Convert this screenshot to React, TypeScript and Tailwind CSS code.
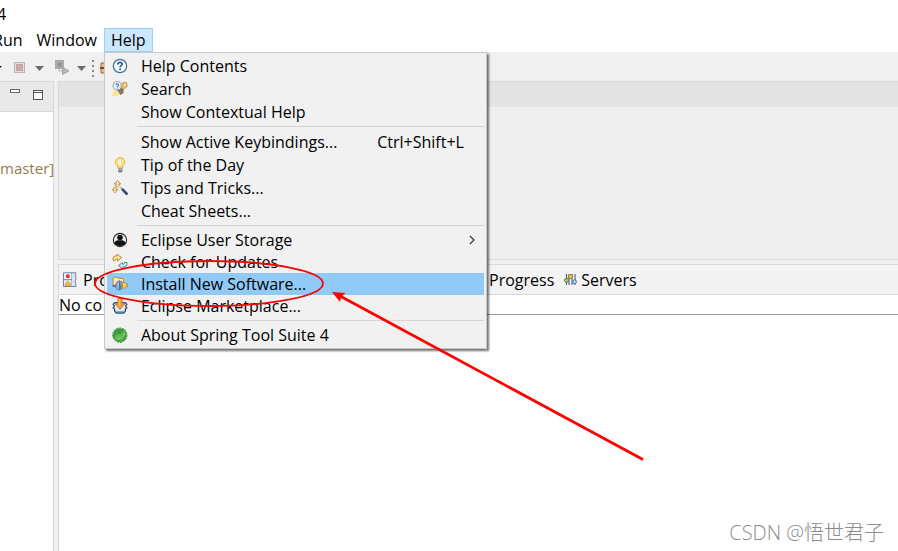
import type {ReactNode} from "react";

interface MenuEntry {
  label: string;
  icon?: ReactNode;
  shortcut?: string;
  submenu?: boolean;
  active?: boolean;
}

const HelpIcon = () => (
  <svg width="16" height="16" viewBox="0 0 16 16" fill="none">
    <circle cx="8" cy="8" r="6.7" fill="#f6fafd" stroke="#3f6fa0" strokeWidth="1.2" />
    <path d="M5.9 6.4C5.9 3.6 10.2 3.7 10.1 6.2C10.1 7.7 8.1 7.6 8.1 9.3" stroke="#2b5f95" strokeWidth="1.7" />
    <rect x="7.2" y="10.4" width="1.8" height="1.7" fill="#2b5f95" />
  </svg>
);

const SearchIcon = () => (
  <svg width="16" height="16" viewBox="0 0 16 16" fill="none">
    <path d="M0 15L2 9.5L6 10L8 13L5 15Z" fill="#fbe388" />
    <path d="M8 6L11 1.5H14.5L15.5 5L9 11Z" fill="#eeb860" stroke="#c98f45" strokeWidth=".7" />
    <path d="M5 9L8.5 5.5L11.5 8.5V12L8.5 14Z" fill="#85756c" />
    <circle cx="12.7" cy="4" r="1.1" fill="#fff3cf" />
    <circle cx="5.2" cy="4.8" r="4.1" fill="#edf3f9" stroke="#8d9eb0" />
    <path d="M3.9 4C4 2.4 6.6 2.5 6.5 4C6.5 4.9 5.3 4.9 5.3 5.9M5.3 6.6V7.5" stroke="#55779d" strokeWidth="1.1" />
  </svg>
);

const BulbIcon = () => (
  <svg width="16" height="16" viewBox="0 0 16 16" fill="none">
    <path d="M5.9 11L5.4 8.8C1.6 5.8 3.8.8 8.2.8S14.6 5.8 10.9 8.8L10.4 11Z" fill="#ffe08a" stroke="#e9ad42" />
    <path d="M6 4.5C6.5 3 8 2.6 9 3.2V8H7.2Z" fill="#fffbe0" />
    <path d="M6 11.5H10.5V14L9.4 15.4H7.1L6 14Z" fill="#6d7d85" />
    <path d="M6 12.8H10.5" stroke="#c9d4d7" strokeWidth=".8" />
  </svg>
);

const WandIcon = () => (
  <svg width="16" height="16" viewBox="0 0 16 16" fill="none">
    <path d="M5.5.3L7.1 1.9L6.5 3L8.8 3.8L6.5 4.6L7.1 5.6L5.5 7.2L3.9 5.6L4.5 4.6L2.2 3.8L4.5 3L3.9 1.9Z" fill="#fff3bd" stroke="#b1882c" strokeWidth=".9" />
    <path d="M3 6.6L4.4 8L3.8 9L5.8 9.7L3.8 10.5L4.4 11.4L3 12.8L1.6 11.4L2.2 10.5L.2 9.7L2.2 9L1.6 8Z" fill="#fff3bd" stroke="#b1882c" strokeWidth=".9" />
    <path d="M8 7L10.2 9" stroke="#b8bcc4" strokeWidth="2.2" />
    <path d="M10 8.8L15.4 14.5" stroke="#33466e" strokeWidth="2.6" />
  </svg>
);

const UserIcon = () => (
  <svg width="16" height="16" viewBox="0 0 16 16" fill="none">
    <circle cx="8" cy="8" r="6.6" fill="#eee" stroke="#222" strokeWidth="1.1" />
    <circle cx="8" cy="5.5" r="2.8" fill="#111" />
    <path d="M2.6 11.3C2.8 8.8 5 8 6.5 8.3H9.5C11 8 13.2 8.8 13.4 11.3C11 14.9 5 14.9 2.6 11.3Z" fill="#111" />
  </svg>
);

const UpdateIcon = () => (
  <svg width="16" height="16" viewBox="0 0 16 16" fill="none">
    <path d="M1 6.2C.6 3 2 1.6 5 1.8V.2L9.7 3.6L5.6 6.9V4.9C4 4.8 3.5 5.2 3.7 6.3Z" fill="#ffe6a0" stroke="#c68a36" />
    <path d="M15 8.4C15.6 11.8 13.9 13.2 11 13.1V14.9L6.3 11.6L10.5 8.5V10.2C12 10.3 12.6 9.8 12.3 8.5Z" fill="#c8e6ea" stroke="#528f9e" />
  </svg>
);

const InstallIcon = () => (
  <svg width="16" height="16" viewBox="0 0 16 16" fill="none">
    <path d="M1 11V2.2L2 1.2H5.6L6.6 2.4H11.4V10.6H1Z" fill="#fbe4a6" stroke="#b98635" />
    <path d="M2 4H10.8" stroke="#fff8dc" />
    <path d="M10.3 6.5H12.5C13.6 6.5 14 7.6 14 8.2H15.6V10.4H14C14 11 13.6 12.2 12.5 12.2H10.3Z" fill="#f7d26b" stroke="#a9792c" strokeWidth=".8" />
    <path d="M1 9.4H4V7.5L6.4 4.8H7.5V14H6.4L4 11.8V10H1Z" fill="#9fb9e0" stroke="#416aa8" strokeWidth=".9" />
    <path d="M8.9 4.8V14" stroke="#506f9e" strokeWidth="1.3" />
  </svg>
);

const MarketIcon = () => (
  <svg width="16" height="16" viewBox="0 0 16 16" fill="none">
    <path d="M2.5 4.8H13.5L14.8 6.3L13.6 8L14.8 9.8L13.3 11.3V13.5L11.5 15H4.5L2.7 13.5V11.3L1.2 9.8L2.4 8L1.2 6.3Z" fill="#e6edf4" stroke="#2d5b88" strokeWidth="1.4" />
    <path d="M4.3 13.4H11.8" stroke="#77a1c4" />
    <path d="M5.8.5H10.2V6H12.6L8 11.6L3.4 6H5.8Z" fill="#f39a3d" stroke="#cf6d20" strokeWidth=".8" />
    <path d="M7.2 1.5V8" stroke="#ffca89" />
  </svg>
);

const SpringIcon = () => (
  <svg width="16" height="16" viewBox="0 0 16 16" fill="none">
    <circle cx="7.8" cy="8.2" r="6.9" fill="#3d9c3d" />
    <circle cx="7.8" cy="8.2" r="7.2" stroke="#338b34" strokeWidth="1" strokeDasharray="2 1" />
    <path d="M13.2 1.5C11 5 8 4.400 5.200 5.800C2.400 7.400 2.400 11.400 5 12.600C9.800 14.600 14.400 11 13.200 1.500Z" fill="#5dbb50" />
    <path d="M13.2 1.5C11 5 8 4.4 5 6C3.8 6.6 3.2 7.6 3 8.600C6.500 6.800 11 8 13.200 1.500Z" fill="#3f9c3c" />
    <path d="M3.6 12C8 12.4 11.4 10.4 12.8 6" stroke="#8fd482" strokeWidth=".9" />
  </svg>
);

const ProblemsIcon = () => (
  <svg width="14" height="16" viewBox="0 0 14 16" fill="none">
    <path d="M.5.8H9V14.5H.5Z" fill="#eef3fa" stroke="#7184a5" />
    <path d="M9 .8H13C11.5 4 13.8 5.5 12.5 8.3C11.6 10.5 13.3 12 13 14.5H9" fill="#d9e5f3" stroke="#7184a5" />
    <path d="M.5 7.7H9" stroke="#7184a5" />
    <circle cx="4.8" cy="4.3" r="2" fill="#dc3741" />
    <path d="M2 13.5C2.4 11.4 3.2 9.6 4.8 9.2C6.4 9.6 7.2 11.4 7.6 13.5Z" fill="#f4b545" stroke="#df9130" strokeWidth=".7" />
  </svg>
);

const ServersIcon = () => (
  <svg width="13" height="13" viewBox="0 0 13 13" fill="none">
    <path d="M2.5 1V12M5 1V12M8 1V12M11 1V12" stroke="#4d5a7c" strokeWidth="1.1" />
    <circle cx="2.5" cy="7.3" r="2" fill="#a8d68b" stroke="#477d39" />
    <circle cx="6.5" cy="3.6" r="2" fill="#f0cc58" stroke="#9c711d" />
    <circle cx="10.6" cy="8.7" r="1.9" fill="#b6d5f2" stroke="#4776ae" />
  </svg>
);

// entries between two separators
const upperGroups: MenuEntry[][] = [
  [
    {label: "Help Contents", icon: <HelpIcon />},
    {label: "Search", icon: <SearchIcon />},
    {label: "Show Contextual Help"},
  ],
  [
    {label: "Show Active Keybindings...", shortcut: "Ctrl+Shift+L"},
    {label: "Tip of the Day", icon: <BulbIcon />},
    {label: "Tips and Tricks...", icon: <WandIcon />},
    {label: "Cheat Sheets..."},
  ],
];

const lowerGroups: MenuEntry[][] = [
  [
    {label: "Eclipse User Storage", icon: <UserIcon />, submenu: true},
    {label: "Check for Updates", icon: <UpdateIcon />},
    {label: "Install New Software...", icon: <InstallIcon />, active: true},
    {label: "Eclipse Marketplace...", icon: <MarketIcon />},
  ],
  [{label: "About Spring Tool Suite 4", icon: <SpringIcon />}],
];

function MenuRow({item, height}: {item: MenuEntry; height: string}) {
  return (
    <button
      role="menuitem"
      className={`flex w-full items-center pl-[5px] text-left ${height} ${item.active ? "bg-[#91c9f7]" : ""}`}
    >
      <span className="w-4 shrink-0">{item.icon}</span>
      <span className="ml-[13px] grow whitespace-nowrap">{item.label}</span>
      {item.shortcut && <span className="mr-5 whitespace-nowrap">{item.shortcut}</span>}
      {item.submenu && (
        <svg className="mr-2" width="8" height="12" viewBox="0 0 8 12" fill="none">
          <path d="M2 2L6 6L2 10" stroke="#333" strokeWidth="1.2" />
        </svg>
      )}
    </button>
  );
}

const Separator = () => <div role="separator" className="my-[3px] ml-[30px] h-px bg-[#d5d5d5]" />;

function HelpMenu() {
  return (
    <div
      role="menu"
      className="absolute top-full left-0 z-10 w-[383px] border border-[#c8c8c8] bg-[#f1f1f1] px-[2px] pt-px pb-[2px] shadow-[2px_2px_2px_rgba(0,0,0,0.55)]"
    >
      {upperGroups.map((group, i) => (
        <div key={i}>
          {group.map((item) => <MenuRow key={item.label} item={item} height="h-[23px]" />)}
          <Separator />
        </div>
      ))}
      {lowerGroups.map((group, i) => (
        <div key={i}>
          {i > 0 && <Separator />}
          {group.map((item) => <MenuRow key={item.label} item={item} height="h-[22px]" />)}
        </div>
      ))}
    </div>
  );
}

function Toolbar() {
  return (
    <div className="flex h-[29px] items-center bg-[#f0f0f0]">
      <svg width="106" height="20" viewBox="0 0 106 20" fill="none">
        <path d="M-4 9H2L-1 12Z" fill="#111" />
        <rect x="14.5" y="5.5" width="10" height="10" fill="#e6dcde" stroke="#bbb3b5" />
        <rect x="16.5" y="7.5" width="6" height="6" fill="#cfa9af" stroke="#c5a0a6" />
        <path d="M35 9H44L39.5 14Z" fill="#6b6b70" />
        <rect x="55.5" y="3.5" width="8" height="8" fill="#a9adab" stroke="#a8a8a8" />
        <rect x="57.5" y="5.5" width="4" height="4" fill="#8e9491" />
        <path d="M59 12V14H62" stroke="#b5b5b5" />
        <path d="M62.5 10L69 14L62.5 17.5Z" fill="#b8bab9" stroke="#a2a2a2" />
        <path d="M77 9H86L81.5 14Z" fill="#6b6b70" />
        <path d="M93 3V20" stroke="#8c8578" strokeWidth="2" strokeDasharray="2 3" />
        <path d="M101 6H106V16H101Z" fill="#e7bd8c" stroke="#a76937" />
        <path d="M100 11H106" stroke="#7b4a26" strokeWidth="2" />
      </svg>
    </div>
  );
}

export default function App() {
  return (
    <div className="relative flex min-h-screen flex-col overflow-hidden bg-[#f0f0f0] font-['Open_Sans','Noto_Sans_CJK_SC',sans-serif] text-[16px] leading-5 text-black">
      <header className="flex h-7 items-center bg-white">
        <span className="-ml-[3px]">4</span>
      </header>
      <nav className="-ml-[14px] flex h-6 bg-white">
        <button className="border border-transparent px-[6px]">Run</button>
        <button className="border border-transparent px-[6px]">Window</button>
        <div className="relative">
          <button className="h-full border border-[#99d1ff] bg-[#cce8ff] px-[6px]">Help</button>
          <HelpMenu />
        </div>
      </nav>
      <Toolbar />

      <div className="flex grow">
        <aside className="flex w-[54px] shrink-0 flex-col border-t border-r border-[#d9d9d9] bg-white">
          <div className="flex h-[30px] items-center justify-end border-b border-[#d9d9d9] bg-[#e9e9e9] pr-[9px] pb-1">
            <svg width="36" height="16" viewBox="0 0 36 16" fill="none">
              <rect x="2.5" y="2.5" width="9" height="3" fill="#fff" stroke="#666" />
              <rect x="25.5" y="3.5" width="9" height="9" fill="#fff" stroke="#555" />
              <path d="M25 5.5H35" stroke="#555" />
            </svg>
          </div>
          <p className="mt-[46px] text-[15px] text-[#937c4e]">master]</p>
        </aside>

        <main className="ml-1 flex min-w-0 grow flex-col">
          <section className="h-[179px] border border-r-0 border-[#d9d9d9] bg-[#efefef]">
            <div className="h-[25px] bg-[#e4e4e4]" />
          </section>
          <section className="mt-1 flex grow flex-col border-t border-l border-[#d9d9d9] bg-white">
            <div role="tablist" className="flex h-[30px] items-center border-b border-[#d9d9d9] bg-[#f3f3f3]">
              <button role="tab" className="flex w-[430px] items-center gap-[6px] pl-1">
                <ProblemsIcon />Pro
              </button>
              <button role="tab">Progress</button>
              <button role="tab" className="ml-[10px] flex items-center gap-1">
                <ServersIcon />Servers
              </button>
            </div>
            <p className="h-5 border-b border-[#999]">No co</p>
          </section>
        </main>
      </div>

      {/* red marks drawn over the menu */}
      <svg
        className="pointer-events-none absolute top-[256px] left-[90px] z-20"
        width="560"
        height="210"
        viewBox="90 256 560 210"
        fill="none"
      >
        <ellipse cx="209" cy="283.5" rx="114" ry="22.5" stroke="#f00808" strokeWidth="1.8" />
        <path d="M340 296L642 459" stroke="#ff0000" strokeWidth="2.8" strokeLinecap="round" />
        <path d="M332 292L345.500 293L341 297L340 302Z" fill="#ff0000" />
      </svg>
      <span className="absolute right-[14px] bottom-[6px] text-[20px] leading-6 font-light text-[#8c8c8c]">
        CSDN @悟世君子
      </span>
    </div>
  );
}
